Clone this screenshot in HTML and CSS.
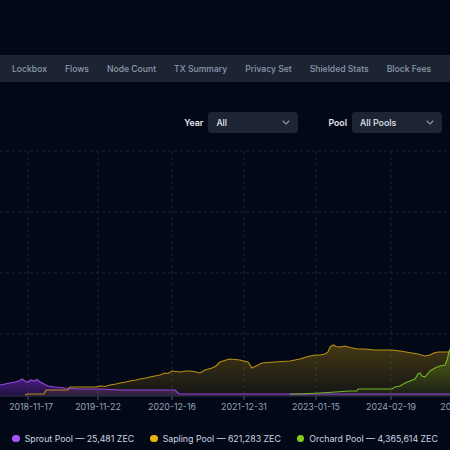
FILE: index.html
```html
<!DOCTYPE html>
<html>
<head>
<meta charset="utf-8">
<link rel="stylesheet" href="styles.css">
</head>
<body>
<div class="page">
  <div class="top"></div>
  <nav class="nav">
    <span class="nav-item">Lockbox</span>
    <span class="nav-item">Flows</span>
    <span class="nav-item">Node Count</span>
    <span class="nav-item">TX Summary</span>
    <span class="nav-item">Privacy Set</span>
    <span class="nav-item">Shielded Stats</span>
    <span class="nav-item">Block Fees</span>
  </nav>
  <div class="filters">
    <div class="filter">
      <span class="filter-label">Year</span>
      <div class="select"><span>All</span>
        <svg class="chev" width="8" height="5" viewBox="0 0 8 5"><path d="M1 1l3 3 3-3" fill="none" stroke="#8b95a7" stroke-width="1.1" stroke-linecap="round" stroke-linejoin="round"/></svg>
      </div>
    </div>
    <div class="filter">
      <span class="filter-label">Pool</span>
      <div class="select"><span>All Pools</span>
        <svg class="chev" width="8" height="5" viewBox="0 0 8 5"><path d="M1 1l3 3 3-3" fill="none" stroke="#8b95a7" stroke-width="1.1" stroke-linecap="round" stroke-linejoin="round"/></svg>
      </div>
    </div>
  </div>
  <svg class="chart" width="450" height="270" viewBox="0 145 450 270">
    <defs>
      <linearGradient id="gSap" gradientUnits="userSpaceOnUse" x1="0" y1="345" x2="0" y2="396">
        <stop offset="0" stop-color="#eab308" stop-opacity="0.28"/>
        <stop offset="1" stop-color="#eab308" stop-opacity="0.07"/>
      </linearGradient>
      <linearGradient id="gSpr" gradientUnits="userSpaceOnUse" x1="0" y1="378" x2="0" y2="396">
        <stop offset="0" stop-color="#9333ea" stop-opacity="0.5"/>
        <stop offset="1" stop-color="#9333ea" stop-opacity="0.2"/>
      </linearGradient>
      <linearGradient id="gOrc" gradientUnits="userSpaceOnUse" x1="0" y1="350" x2="0" y2="396">
        <stop offset="0" stop-color="#84cc16" stop-opacity="0.3"/>
        <stop offset="1" stop-color="#84cc16" stop-opacity="0.05"/>
      </linearGradient>
    </defs>
    <g class="grid">
      <line x1="0" y1="151" x2="450" y2="151"/>
      <line x1="0" y1="212" x2="450" y2="212"/>
      <line x1="0" y1="273" x2="450" y2="273"/>
      <line x1="0" y1="334" x2="450" y2="334"/>
      <line x1="28" y1="151" x2="28" y2="396"/>
      <line x1="98" y1="151" x2="98" y2="396"/>
      <line x1="172" y1="151" x2="172" y2="396"/>
      <line x1="244" y1="151" x2="244" y2="396"/>
      <line x1="316" y1="151" x2="316" y2="396"/>
      <line x1="391" y1="151" x2="391" y2="396"/>
    </g>
    <path fill="url(#gSpr)" d="M0 385 L5 384 L10 383 L15 382 L19 381 L22 379 L25 381 L28 382 L31 380 L34 381 L37 379.5 L40 382 L44 384 L48 386 L55 387 L65 388 L80 389 L100 389 L120 390 L150 390 L175 390 L178 393 L180 394 L450 394 L450 396 L0 396 Z"/>
    <path fill="url(#gSap)" d="M25 395 L28 394 L44 394 L46 390 L68 390 L70 387 L96 387 L100 386 L105 386.5 L110 385 L116 384 L120 383 L126 382 L130 381 L136 380 L140 379 L146 378 L150 377 L155 376 L160 375 L165 373 L168 373.5 L172 371 L176 371.5 L180 372 L186 371 L190 371 L196 372 L200 373 L205 370 L212 368 L216 366 L220 362 L226 360 L230 359 L235 359.5 L240 360 L248 362 L252 368 L256 366 L262 363 L268 362.5 L275 362 L282 361.5 L290 361 L295 360 L300 359 L306 357 L315 355 L320 355 L325 354 L328 352 L330 347 L333 345 L336 346.5 L340 347 L345 346 L350 347.5 L358 349 L365 349 L375 350 L385 350 L392 350 L400 351 L406 352 L412 353 L418 354 L425 356 L430 355 L434 353 L438 352 L450 352 L450 396 L25 396 Z"/>
    <path fill="url(#gOrc)" d="M290 394 L300 394 L320 393 L335 392 L350 391 L357 391 L358 389 L385 389 L392 389 L395 387 L400 386 L405 383 L410 381 L415 379 L418 374 L420 373 L422 376 L425 377 L430 371 L435 368 L440 366 L445 365 L447 360 L449 352 L450 349 L450 396 L290 396 Z"/>
    <path class="ln-spr" d="M0 385 L5 384 L10 383 L15 382 L19 381 L22 379 L25 381 L28 382 L31 380 L34 381 L37 379.5 L40 382 L44 384 L48 386 L55 387 L65 388 L80 389 L100 389 L120 390 L150 390 L175 390 L178 393 L180 394 L450 394"/>
    <path class="ln-sap" d="M25 395 L28 394 L44 394 L46 390 L68 390 L70 387 L96 387 L100 386 L105 386.5 L110 385 L116 384 L120 383 L126 382 L130 381 L136 380 L140 379 L146 378 L150 377 L155 376 L160 375 L165 373 L168 373.5 L172 371 L176 371.5 L180 372 L186 371 L190 371 L196 372 L200 373 L205 370 L212 368 L216 366 L220 362 L226 360 L230 359 L235 359.5 L240 360 L248 362 L252 368 L256 366 L262 363 L268 362.5 L275 362 L282 361.5 L290 361 L295 360 L300 359 L306 357 L315 355 L320 355 L325 354 L328 352 L330 347 L333 345 L336 346.5 L340 347 L345 346 L350 347.5 L358 349 L365 349 L375 350 L385 350 L392 350 L400 351 L406 352 L412 353 L418 354 L425 356 L430 355 L434 353 L438 352 L450 352"/>
    <path class="ln-orc" d="M290 394 L300 394 L320 393 L335 392 L350 391 L357 391 L358 389 L385 389 L392 389 L395 387 L400 386 L405 383 L410 381 L415 379 L418 374 L420 373 L422 376 L425 377 L430 371 L435 368 L440 366 L445 365 L447 360 L449 352 L450 349"/>
    <line class="axis" x1="0" y1="396" x2="450" y2="396"/>
    <g class="ticks">
      <line x1="28" y1="396" x2="28" y2="400"/>
      <line x1="98" y1="396" x2="98" y2="400"/>
      <line x1="172" y1="396" x2="172" y2="400"/>
      <line x1="244" y1="396" x2="244" y2="400"/>
      <line x1="316" y1="396" x2="316" y2="400"/>
      <line x1="391" y1="396" x2="391" y2="400"/>
      <line x1="463" y1="396" x2="463" y2="400"/>
    </g>
    <g class="tick-labels">
      <text x="31" y="410">2018-11-17</text>
      <text x="98" y="410">2019-11-22</text>
      <text x="172" y="410">2020-12-16</text>
      <text x="244" y="410">2021-12-31</text>
      <text x="316" y="410">2023-01-15</text>
      <text x="391" y="410">2024-02-19</text>
      <text x="466" y="410">2025-03-20</text>
    </g>
  </svg>
  <div class="legend">
    <div class="legend-item"><span class="dot dot-spr"></span>Sprout Pool — 25,481 ZEC</div>
    <div class="legend-item"><span class="dot dot-sap"></span>Sapling Pool — 621,283 ZEC</div>
    <div class="legend-item"><span class="dot dot-orc"></span>Orchard Pool — 4,365,614 ZEC</div>
  </div>
</div>
</body>
</html>
```
FILE: styles.css
```css
html, body {
  margin: 0;
  padding: 0;
  background: #030817;
  overflow: hidden;
}
body {
  font-family: Inter, "Noto Sans", sans-serif;
  width: 450px;
  height: 450px;
}
.page {
  width: 450px;
  height: 450px;
  overflow: hidden;
}
.top {
  height: 55px;
}
.nav {
  height: 27px;
  background: #1c2331;
  display: flex;
  align-items: center;
  gap: 18px;
  padding-left: 12px;
  white-space: nowrap;
}
.nav-item {
  font-size: 8.6px;
  font-weight: 500;
  color: #8e9aae;
}
.filters {
  margin-top: 30px;
  height: 21px;
  display: flex;
  justify-content: flex-end;
  gap: 30px;
  padding-right: 8px;
}
.filter {
  display: flex;
  align-items: center;
  gap: 5px;
}
.filter-label {
  font-size: 8.8px;
  font-weight: 600;
  color: #e2e8f0;
}
.select {
  width: 90px;
  height: 21px;
  box-sizing: border-box;
  background: #1d2534;
  border-radius: 4px;
  display: flex;
  align-items: center;
  justify-content: space-between;
  padding: 0 8px;
  font-size: 8.8px;
  font-weight: 500;
  color: #e2e8f0;
}
.chart {
  display: block;
  margin-top: 12px;
}
.grid line {
  stroke: #1a2232;
  stroke-width: 1;
  stroke-dasharray: 3 3;
}
.ln-spr { fill: none; stroke: #9445dd; stroke-width: 1.2; }
.ln-sap { fill: none; stroke: #b8900f; stroke-width: 1.1; }
.ln-orc { fill: none; stroke: #72b826; stroke-width: 1.1; }
.axis { stroke: #2c3546; stroke-width: 1; }
.ticks line { stroke: #4a5568; stroke-width: 1; }
.tick-labels text {
  font-family: Inter, "Noto Sans", sans-serif;
  font-size: 8.8px;
  fill: #94a3b8;
  text-anchor: middle;
}
.legend {
  margin-top: 18px;
  display: flex;
  justify-content: center;
  gap: 16px;
  white-space: nowrap;
}
.legend-item {
  display: flex;
  align-items: center;
  gap: 5px;
  font-size: 8.8px;
  color: #cbd5e1;
}
.dot {
  width: 7.5px;
  height: 7.5px;
  border-radius: 50%;
  display: inline-block;
}
.dot-spr { background: #a855f7; }
.dot-sap { background: #eab308; }
.dot-orc { background: #84cc16; }
```
